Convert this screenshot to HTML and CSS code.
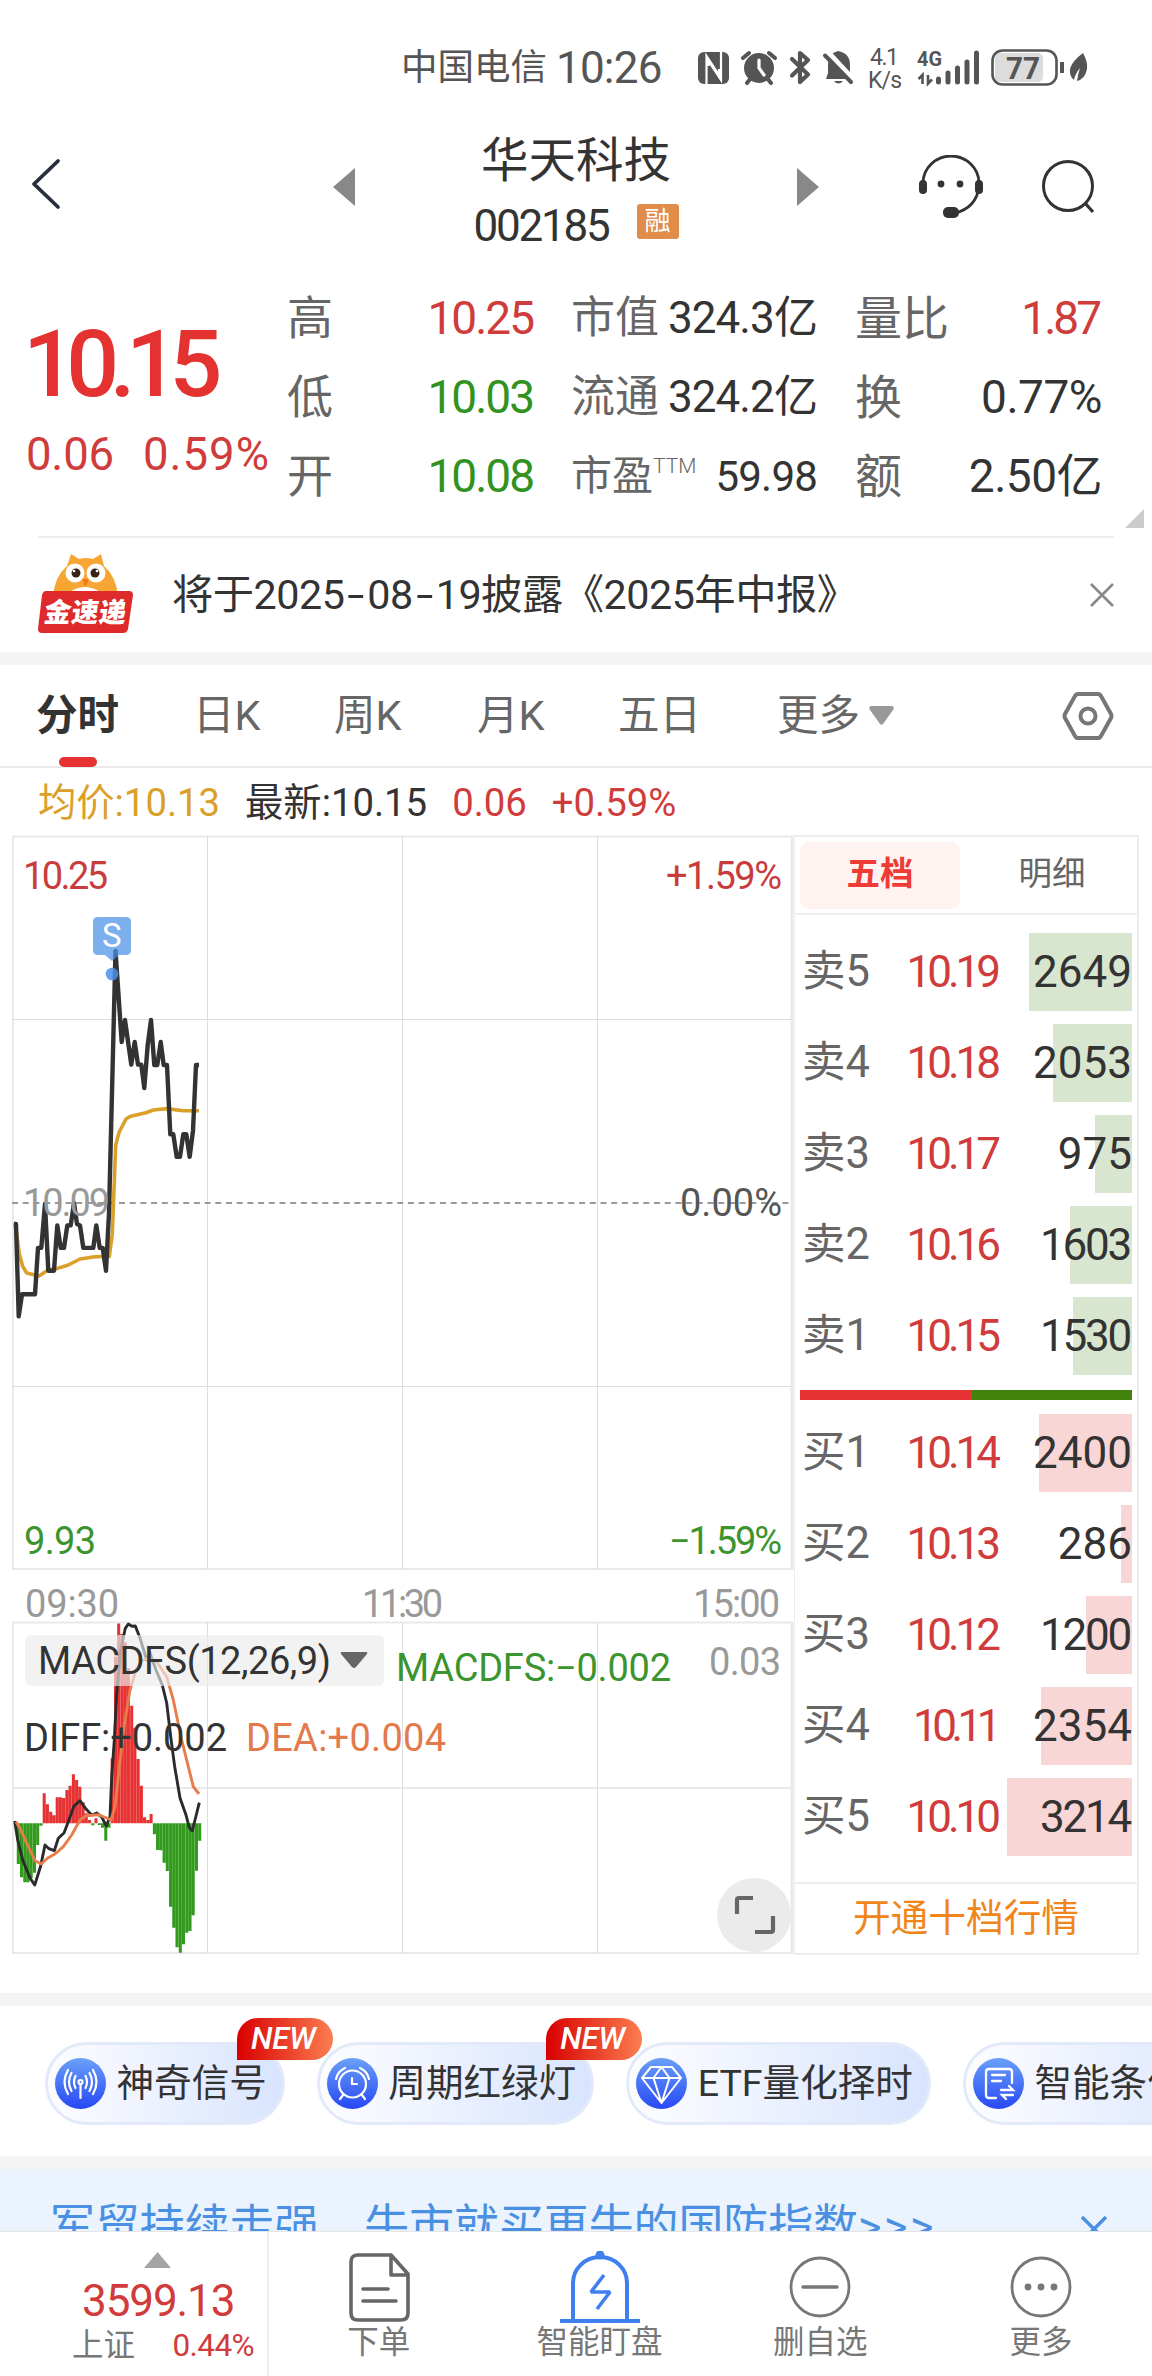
FILE: index.html
```html
<!DOCTYPE html>
<html lang="zh-CN">
<head>
<meta charset="utf-8">
<title>华天科技 002185</title>
<link rel="stylesheet" href="styles.css">
</head>
<body>
<div class="app">

<div class="status">
  <span class="carrier">中国电信</span><span class="clock">10:26</span>
  <svg class="sys" width="400" height="50" viewBox="692 42 400 50" fill="#555">
    <rect x="698" y="52" width="31" height="32" rx="6"/>
    <path d="M706.500 84V56L719 75V69M721 52V80L708.500 61V66" fill="none" stroke="#fff" stroke-width="2.200"/>
    <circle cx="759" cy="68" r="15"/>
    <path d="M743 58l6-5M775 58l-6-5M747 83l4-5M771 83l-4-5" stroke="#555" stroke-width="4" stroke-linecap="round"/>
    <path d="M759 60v8l5 7" fill="none" stroke="#fff" stroke-width="3.200" stroke-linecap="round"/>
    <path d="M792 59l16 15.500-8 7.500V53l8 7-16 15.500" fill="none" stroke="#555" stroke-width="4.200" stroke-linejoin="round" stroke-linecap="round"/>
    <path d="M838 51q12 2 12 14v8l2 6h-26l2-6v-8q0-12 10-14zM834 81h9q-4.500 5-9 0z"/>
    <path d="M826 50l28 30" stroke="#fff" stroke-width="5"/><path d="M825 55.500l26 26.500" stroke="#555" stroke-width="4" stroke-linecap="round"/>
    <text x="870" y="65" font-size="23" textLength="29">4.1</text>
    <text x="868" y="88" font-size="23" textLength="34">K/s</text>
    <text x="917" y="66" font-size="21" font-weight="700" textLength="25" lengthAdjust="spacingAndGlyphs">4G</text>
    <path d="M922.500 84v-9l-4 4M928 75v8.500l4-4" fill="none" stroke="#555" stroke-width="2.600"/>
    <path d="M938.500 82v-3M948 82V73M957.500 82V68M967 82V62M976.500 82V53" stroke="#555" stroke-width="5" stroke-linecap="round"/>
    <rect x="995" y="53" width="48" height="29" rx="5" fill="#dcdcdc"/>
    <rect x="992.500" y="50.500" width="64" height="34" rx="10" fill="none" stroke="#555" stroke-width="2.600"/>
    <text x="1006" y="79" font-size="31" font-weight="700" textLength="34" lengthAdjust="spacingAndGlyphs">77</text>
    <path d="M1062 62v11" stroke="#555" stroke-width="4"/>
    <path d="M1083 53q5 9 4 16-2 10-10 12 1-7 3-13-5 6-6 12-5-4-4-11 2-8 13-16z"/>
  </svg>
</div>

<div class="header">
  <svg width="333" height="60" viewBox="0 0 333 60"><path d="M58 4L34 27l24 23" fill="none" stroke="#27303c" stroke-width="3.800" stroke-linecap="round" stroke-linejoin="round"/></svg>
  <svg width="22" height="38" viewBox="0 0 22 38"><path d="M22 0v38L0 19z" fill="#888"/></svg>
  <div class="names">
    <div class="name">华天科技</div>
    <div class="code"><span>002185</span><i>融</i></div>
  </div>
  <svg width="22" height="38" viewBox="0 0 22 38"><path d="M0 0v38l22-19z" fill="#888"/></svg>
  <svg class="c5" width="64" height="64" viewBox="0 0 64 64"><path d="M4 30V28a28 27 0 0 1 56 0v4q-3 21-24 26" fill="none" stroke="#333" stroke-width="2.800"/><rect x="0" y="25" width="8" height="14" rx="4" fill="#333"/><rect x="56" y="25" width="8" height="14" rx="4" fill="#333"/><rect x="24" y="52" width="16" height="11" rx="5" fill="#333"/><circle cx="22" cy="29" r="3.400" fill="#333"/><circle cx="41" cy="29" r="3.400" fill="#333"/></svg>
  <svg class="c7" width="56" height="58" viewBox="0 0 56 58"><circle cx="26" cy="28" r="24.500" fill="none" stroke="#333" stroke-width="3"/><path d="M43 45l8 9" stroke="#333" stroke-width="3.200"/></svg>
</div>

<div class="quote">
  <div class="price"><div class="big">10.15</div><div class="chg"><span>0.06</span><span class="pct">0.59%</span></div></div>
  <div class="stats s1">
    <label>高</label><b class="red">10.25</b>
    <label>低</label><b class="green">10.03</b>
    <label>开</label><b class="green">10.08</b>
  </div>
  <div class="stats s2">
    <label>市值</label><b>324.3亿</b>
    <label>流通</label><b>324.2亿</b>
    <label class="pe">市盈<sup>TTM</sup></label><b class="pev">59.98</b>
  </div>
  <div class="stats s3">
    <label>量比</label><b class="red one">1.87</b>
    <label>换</label><b>0.77%</b>
    <label>额</label><b>2.50亿</b>
  </div>
  <svg class="corner" width="19" height="19" viewBox="0 0 19 19"><path d="M19 0v19H0z" fill="#ccc"/></svg>
</div>

<div class="notice">
  <svg class="owl" width="96" height="84" viewBox="0 0 96 84">
    <path d="M33 3l8 5q7-2 14 0l8-5 3 12q12 10 14 30H15q2-20 14-30z" fill="#f7a634"/>
    <path d="M30 42q17-12 34 0z" fill="#fff"/>
    <circle cx="37" cy="22" r="9.500" fill="#fff"/><circle cx="58" cy="22" r="9.500" fill="#fff"/>
    <circle cx="38" cy="22" r="4.500" fill="#3a2418"/><circle cx="57" cy="22" r="4.500" fill="#3a2418"/>
    <circle cx="36" cy="20" r="1.300" fill="#fff"/><circle cx="59" cy="20" r="1.300" fill="#fff"/>
    <path d="M44 28h7l-3.500 8z" fill="#ee7a1c"/>
    <path d="M8 40h83q4 0 4 4l-5 34q-1 4-5 4H4q-4 0-4-4l4-34q1-4 4-4z" fill="#de2a2a"/>
    <text transform="translate(5 71) skewX(-8)" font-size="27" font-weight="900" fill="#fff" textLength="82">金速递</text>
  </svg>
  <span class="msg">将于2025<em>-</em>08<em>-</em>19披露《2025年中报》</span>
  <svg width="24" height="24" viewBox="0 0 24 24"><path d="M1 1l22 22M23 1L1 23" stroke="#888" stroke-width="2.600"/></svg>
</div>
<div class="band"></div>

<div class="tabs">
  <span class="on">分时</span><span>日K</span><span>周K</span><span>月K</span><span>五日</span><span>更多</span>
  <svg width="25" height="19" viewBox="0 0 25 19"><path d="M2 0h21q3 1 1 4L14 18q-1.500 1.500-3 0L1 4Q-1 1 2 0z" fill="#999"/></svg>
  <svg class="hex" width="52" height="50" viewBox="0 0 52 50" fill="none" stroke="#777" stroke-width="4"><path d="M16 3h20q2 0 3 2l10 18q1 2 0 4L39 45q-1 2-3 2H16q-2 0-3-2L3 27q-1-2 0-4L13 5q1-2 3-2z"/><circle cx="26" cy="25" r="7.500"/></svg>
</div>

<div class="info"><span class="gold">均价:10.13</span><span>最新:10.15</span><span class="red">0.06</span><span class="red">+0.59%</span></div>

<div class="board">
<svg class="chart" width="794" height="1120" viewBox="0 835 794 1120">
  <g fill="none" stroke="#e9e9e9" stroke-width="2">
    <path d="M12 836.500H793M12 1569H793M12 1622.500H793M12 1788H793M12 1953H793"/>
    <path d="M13 836V1570M13 1622V1954"/>
    <path d="M792 836V1570M792 1622V1954" stroke-width="3"/>
  </g>
  <path d="M12 1019.500H791M12 1386.500H791M207.500 836V1569M402.500 836V1569M597.500 836V1569M207.500 1622V1953M402.500 1622V1953M597.500 1622V1953" stroke="#dedede" fill="none"/>
  <path d="M12 1203H793" stroke="#999" stroke-width="2" stroke-dasharray="6 4.700"/>
  <path d="M15 1223L16.700 1234 19.300 1254 22.700 1266.400 26.700 1273 39 1276 48 1270 56.700 1268.600 68.300 1265 80 1259 95 1256.800 109.300 1256.400 112.300 1234 115.700 1145 119 1132.500 126 1119 130 1116.400 146.700 1112.500 153.300 1110 166.700 1108.600 183.300 1110.700H199" fill="none" stroke="#dba02a" stroke-width="3.600" stroke-linejoin="round"/>
  <path d="M14 1224H16L18.700 1316.400 22 1294.300H35L38 1247.900H41.300L45 1204 48.300 1270.700H54L57.300 1225.400 60.700 1247.900H64L67.300 1225.400H70.700L74 1203 77 1224 80 1225.400 83.300 1247.900H93.300L96.300 1225.400 99.700 1247.900H102.700L106 1270.700 109 1213 115.500 951 121.700 1042 125 1020 131.300 1064.600 134.700 1042 138 1064.600H141.300L144.300 1088 147.700 1045 151 1020 154.300 1065H157.300L160.700 1042 163.700 1065H167L170.300 1134.300H173.300L176.700 1156.800H180L183.300 1134.300H186.300L189.700 1156.800 193 1130.700 196 1065H199" fill="none" stroke="#333" stroke-width="4.400" stroke-linejoin="round"/>
  <path d="M98 917h28q5 0 5 5v28q0 5-5 5h-7l-7 6-7-6h-7q-5 0-5-5v-28q0-5 5-5z" fill="#4a90e8" opacity=".72"/>
  <circle cx="112" cy="974" r="6.300" fill="#4a90e8" opacity=".85"/>
  <text x="102" y="947" font-size="33" fill="#fff">S</text>

  <path d="M18.300 1823.300V1864M21.500 1823.300V1877.300M24.800 1823.300V1882.300M28 1823.300V1882.300M31.200 1823.300V1878.300M34.500 1823.300V1872.700M37.700 1823.300V1845M41 1823.300V1825.700M92.800 1823.300V1825.300M99.300 1823.300V1825M102.500 1823.300V1827.700M105.800 1823.300V1840.700M109 1823.300V1827.700M154.400 1823.300V1834.300M157.600 1823.300V1850M160.800 1823.300V1850.300M164.100 1823.300V1862.700M167.300 1823.300V1871M170.600 1823.300V1906.700M173.800 1823.300V1927.700M177 1823.300V1947.300M180.300 1823.300V1952.700M183.500 1823.300V1944.300M186.800 1823.300V1932.700M190 1823.300V1931M193.200 1823.300V1915.300M196.500 1823.300V1870.700M199.700 1823.300V1840.700" stroke="#329b1e" stroke-width="3.060"/>
  <path d="M44.200 1823.300V1793.300M47.400 1823.300V1804.300M50.700 1823.300V1811.700M53.900 1823.300V1815.300M57.200 1823.300V1797.300M60.400 1823.300V1797.300M63.600 1823.300V1798M66.900 1823.300V1790M70.100 1823.300V1785.700M73.400 1823.300V1774.300M76.600 1823.300V1780M79.800 1823.300V1786.700M83.100 1823.300V1802.300M86.300 1823.300V1813.300M89.600 1823.300V1820M96 1823.300V1818.300M112.200 1823.300V1758.300M115.500 1823.300V1656.700M118.700 1823.300V1623.500M122 1823.300V1634M125.200 1823.300V1642.300M128.400 1823.300V1668.300M131.700 1823.300V1705.700M134.900 1823.300V1727.700M138.200 1823.300V1759M141.400 1823.300V1785.700M144.600 1823.300V1817.300M147.900 1823.300V1820M151.100 1823.300V1814" stroke="#e63232" stroke-width="3.060"/>
  <path d="M14.700 1821L17.700 1840 22.700 1860 30 1878 34.700 1885 40.700 1866 45 1845 49 1848.700 54.300 1850.700 58.300 1838.300 64 1833 68.300 1821.700 74 1806 80 1800.700 86 1809 91.700 1815 96.700 1813 101.700 1817 106.300 1826 110 1816.700 111.700 1776.700 114.300 1740 116.700 1693 120.700 1650 125.300 1628.300 128.300 1624 132 1626.300 135.300 1626 140 1638 146.700 1660 150 1653 156 1670 162.300 1685 166.700 1703 170.700 1736.700 174.700 1766.700 180 1798 186 1815 189.300 1827.700 192.300 1830.700 195 1820 199.300 1802.700" fill="none" stroke="#2b2b2b" stroke-width="2.900" stroke-linejoin="round"/>
  <path d="M16 1821.700L20 1828.300 28.300 1846.700 35 1860.700 41.300 1864 47.700 1858 55 1854 63.300 1846.700 71.700 1835 80 1820 86 1815.700 98.300 1814.700 106.700 1818 111 1820 115 1806.700 118.300 1776.700 124 1726.700 130 1690 136 1670 141.700 1661 148.300 1658 156.700 1661.700 166.700 1676.700 173.300 1700 181.700 1740 193.300 1786.700 199 1794" fill="none" stroke="#e87c4a" stroke-width="2.900" stroke-linejoin="round"/>
  <rect x="25" y="1635" width="359" height="51" rx="6" fill="#ebebeb" opacity=".66"/>
  <path d="M342 1652h24q2 0 1 2l-11 13q-2 2-4 0l-11-13q-1-2 1-2z" fill="#666"/>

  <g font-size="38">
    <text x="23" y="889" textLength="85" fill="#c93c3c">10.25</text>
    <text x="666" y="889" textLength="116" fill="#c93c3c">+1.59%</text>
    <text x="23" y="1216" textLength="87" fill="#999">10.09</text>
    <text x="680" y="1216" textLength="102" fill="#555">0.00%</text>
    <text x="24" y="1554" textLength="72" fill="#3c942e">9.93</text>
    <text x="669" y="1554" textLength="113" fill="#3c942e">−1.59%</text>
    <g fill="#999">
      <text x="25" y="1617" textLength="94">09:30</text>
      <text x="362" y="1617" textLength="81">11:30</text>
      <text x="693" y="1617" textLength="87">15:00</text>
      <text x="709" y="1675" textLength="72">0.03</text>
    </g>
    <text x="38" y="1674" textLength="293" fill="#333">MACDFS(12,26,9)</text>
    <text x="396" y="1681" textLength="275" fill="#3c942e">MACDFS:−0.002</text>
    <text x="24" y="1751" textLength="203" fill="#333">DIFF:+0.002</text>
    <text x="246" y="1751" textLength="200" fill="#e27a4c">DEA:+0.004</text>
  </g>
  <circle cx="754" cy="1915" r="37" fill="#ebebeb"/>
  <path d="M737 1914v-14q0-2 2-2h14M773 1916v14q0 2-2 2h-16" fill="none" stroke="#666" stroke-width="4.200"/>
</svg>

<div class="book">
  <div class="btabs"><span class="on">五档</span><span>明细</span></div>
  <div class="rows sell">
    <div class="row"><label>卖5</label><b>10.19</b><u style="width:103px"></u><span>2649</span></div>
    <div class="row"><label>卖4</label><b>10.18</b><u style="width:79px"></u><span>2053</span></div>
    <div class="row"><label>卖3</label><b>10.17</b><u style="width:37px"></u><span>975</span></div>
    <div class="row"><label>卖2</label><b>10.16</b><u style="width:62px"></u><span class="tight">1603</span></div>
    <div class="row"><label>卖1</label><b>10.15</b><u style="width:59px"></u><span class="tight">1530</span></div>
  </div>
  <div class="ratio"></div>
  <div class="rows buy">
    <div class="row"><label>买1</label><b>10.14</b><u style="width:93px"></u><span>2400</span></div>
    <div class="row"><label>买2</label><b>10.13</b><u style="width:11px"></u><span>286</span></div>
    <div class="row"><label>买3</label><b>10.12</b><u style="width:46px"></u><span class="tight">1200</span></div>
    <div class="row"><label>买4</label><b class="narrow">10.11</b><u style="width:91px"></u><span>2354</span></div>
    <div class="row"><label>买5</label><b>10.10</b><u style="width:125px"></u><span class="tight">3214</span></div>
  </div>
  <div class="open">开通十档行情</div>
</div>
</div>

<div class="band b2"></div>
<div class="chips">
  <svg width="0" height="0" class="defs"><defs><linearGradient id="ic" x2="0" y2="1"><stop offset="0" stop-color="#6aa0f8"/><stop offset="1" stop-color="#2748f5"/></linearGradient></defs></svg>
  <div class="chip"><svg width="51" height="51" viewBox="0 0 51 51"><circle cx="25.500" cy="25.500" r="25.500" fill="url(#ic)"/><g fill="none" stroke="#fff" stroke-width="2.200" stroke-linecap="round"><circle cx="25.500" cy="24" r="2"/><path d="M25.500 27v13M20.500 30q-3-6 0-12M30.500 30q3-6 0-12M16.500 33q-5-9 0-18M34.500 33q5-9 0-18M13 36q-7-12 0-24M38 36q7-12 0-24"/></g></svg><span>神奇信号</span><i>NEW</i></div>
  <div class="chip"><svg width="51" height="51" viewBox="0 0 51 51"><circle cx="25.500" cy="25.500" r="25.500" fill="url(#ic)"/><g fill="none" stroke="#fff" stroke-width="2.200" stroke-linecap="round"><circle cx="25.500" cy="26" r="13.500"/><path d="M25 20v6h5M16 37l-3 4M35 37l3 4M9 21q2-8 9-11M42 21q-2-8-9-11"/></g></svg><span>周期红绿灯</span><i>NEW</i></div>
  <div class="chip"><svg width="51" height="51" viewBox="0 0 51 51"><circle cx="25.500" cy="25.500" r="25.500" fill="url(#ic)"/><path d="M15 9h21l9 11-19.500 25L6 20zM6 20h39M25.500 9l-8 11 8 25 8-25z" fill="none" stroke="#fff" stroke-width="2" stroke-linejoin="round"/></svg><span>ETF量化择时</span></div>
  <div class="chip"><svg width="51" height="51" viewBox="0 0 51 51"><circle cx="25.500" cy="25.500" r="25.500" fill="url(#ic)"/><path d="M39 25V14q0-3-3-3H16q-3 0-3 3v23q0 3 3 3h7M19 17h13M19 23h9M28 32h12l-4-4M40 37H29l4 4" fill="none" stroke="#fff" stroke-width="2.300" stroke-linecap="round"/></svg><span>智能条件单</span></div>
</div>
<div class="band"></div>
<div class="banner"><span>军贸持续走强　牛市就买更牛的国防指数<em>&gt;&gt;&gt;</em></span><svg width="26" height="26" viewBox="0 0 26 26"><path d="M1 1l24 24M25 1L1 25" stroke="#4a90e2" stroke-width="3.400"/></svg></div>

<div class="nav">
  <div class="index"><svg width="27" height="16" viewBox="0 0 27 16"><path d="M13.500 0L27 16H0z" fill="#a5a5a5"/></svg><strong>3599.13</strong><p><span>上证</span><em>0.44%</em></p></div>
  <div class="item"><svg width="84" height="72" viewBox="0 0 84 72" fill="none" stroke="#666" stroke-width="3.600" stroke-linejoin="round" stroke-linecap="round"><path d="M21 4h33l17 19v39q0 7-7 7H21q-7 0-7-7V11q0-7 7-7zM54 4v20h17M26 38h25M26 50h33"/></svg><span>下单</span></div>
  <div class="item"><svg width="84" height="72" viewBox="0 0 84 72" fill="none" stroke="#3f80ee" stroke-width="4"><path d="M2 70h80M15 70V32a27 26 0 0 1 54 0v38"/><circle cx="42" cy="4" r="2.500" fill="#3f80ee"/><path d="M46 24L33 41h19L39 58" stroke-width="3.600" stroke-linejoin="bevel"/></svg><span>智能盯盘</span></div>
  <div class="item"><svg width="84" height="72" viewBox="0 0 84 72" fill="none" stroke="#777" stroke-width="2.800"><circle cx="42" cy="36" r="29"/><path d="M25 36h34" stroke-width="3.400" stroke-linecap="round"/></svg><span>删自选</span></div>
  <div class="item"><svg width="84" height="72" viewBox="0 0 84 72" fill="#777"><circle cx="42" cy="36" r="29" fill="none" stroke="#777" stroke-width="2.800"/><circle cx="29" cy="36" r="3.400"/><circle cx="42" cy="36" r="3.400"/><circle cx="55" cy="36" r="3.400"/></svg><span>更多</span></div>
</div>
</div>
</body>
</html>
```

FILE: styles.css
```css
* { box-sizing: border-box; }
body {
  margin: 0;
  background: #fff;
  color: #333;
  font-family: Roboto, "Noto Sans CJK SC", sans-serif;
}
svg { display: block; flex: none; }
b, i, em, strong, u { font-weight: 400; font-style: normal; text-decoration: none; }
p { margin: 0; }
.app { width: 1152px; height: 2376px; overflow: hidden; display: flex; flex-direction: column; }
.app > * { flex: none; }
.red { color: #d03b3b; }
.green { color: #32921f; }
.gold { color: #dba02a; }

.status { height: 110px; padding: 42px 0 0 401px; display: flex; color: #555; line-height: 52px; white-space: nowrap; }
.carrier { font-size: 36.500px; width: 155px; }
.clock { font-size: 44px; width: 136px; letter-spacing: -.8px; }

.header {
  height: 154px;
  display: grid;
  grid-template-columns: 333px 22px 442px 22px 100px 64px 59px 56px;
  align-items: center;
}
.c5 { grid-column: 6; }
.c7 { grid-column: 8; }
.names { text-align: center; padding-top: 12px; }
.name { font-size: 47.500px; line-height: 66px; }
.code { display: flex; justify-content: center; align-items: center; gap: 28px; font-size: 44px; line-height: 64px; letter-spacing: -2.200px; }
.code i { width: 42px; height: 35px; margin-top: -9px; background: #e08c4a; color: #fff; border-radius: 3px; font-size: 26px; line-height: 34px; letter-spacing: 0; }

.quote { position: relative; height: 272px; padding: 15px 0 0 26px; display: flex; }
.price { width: 261px; padding-top: 37px; color: #e43230; white-space: nowrap; }
.big { font-size: 93px; font-weight: 500; line-height: 98px; letter-spacing: -9.500px; margin-left: -3px; }
.chg { display: flex; font-size: 45.500px; line-height: 50px; margin-top: 16px; color: #d03b3b; letter-spacing: -.2px; }
.chg .pct { margin-left: 29px; letter-spacing: 1px; }
.stats { display: grid; grid-template-columns: 88px 1fr; grid-auto-rows: 79px; line-height: 79px; white-space: nowrap; }
.stats label { color: #666; font-size: 46px; }
.stats b { text-align: right; font-size: 46px; letter-spacing: -2px; margin-right: 0; }
.s1 { width: 246px; }
.s2 { width: 246px; margin-left: 38px; }
.s2 label { font-size: 44px; }
.s2 b { font-size: 44px; letter-spacing: -.900px; }
.s2 .pe { font-size: 41px; }
.s2 .pev { font-size: 42px; letter-spacing: -.8px; }
.pe sup { font-size: 21px; vertical-align: 17px; line-height: 0; font-weight: 300; }
.s3 { width: 246px; margin-left: 38px; }
.s3 label { font-size: 47px; }
.stats.s3 b { letter-spacing: -.500px; margin-right: -1px; }
.stats.s3 .one { letter-spacing: -3px; margin-right: 2px; }
.corner { position: absolute; right: 8px; bottom: 8px; }

.notice { height: 116px; margin: 0 38px; border-top: 2px solid #eee; display: flex; align-items: center; }
.owl { margin-top: -4px; }
.msg { font-size: 41.300px; margin-left: 38px; flex: 1; letter-spacing: -.5px; white-space: nowrap; line-height: 60px; }
.msg em { display: inline-block; padding: 0 6px; transform: scaleX(1.5); }
.band { height: 13px; background: #f4f4f4; }

.tabs { height: 103px; border-bottom: 2px solid #eaeaea; padding: 0 38px 0 36px; display: flex; align-items: center; font-size: 41.500px; color: #666; line-height: 98px; white-space: nowrap; }
.tabs span { width: 143px; }
.tabs span.on { width: 157px; color: #333; font-weight: 700; position: relative; }
.tabs span:nth-child(2) { width: 141px; }
.tabs span:nth-child(4) { width: 141px; }
.tabs span:nth-child(5) { width: 159px; }
.tabs span:nth-child(6) { width: 92px; }
.tabs .on::after { content: ""; position: absolute; left: 23px; bottom: -2px; width: 38px; height: 10px; border-radius: 5px; background: #e63232; }
.hex { margin-left: auto; }

.info { height: 67px; padding-left: 38px; display: flex; gap: 25px; font-size: 38.300px; line-height: 69px; white-space: nowrap; }

.board { display: flex; height: 1120px; width: 1139px; }
.chart { font-family: Roboto, "Noto Sans CJK SC", sans-serif; }
.book { flex: 1; border: 2px solid #ededed; border-left-width: 1px; }
.btabs { height: 78px; border-bottom: 2px solid #eee; padding: 5px 5px; display: flex; font-size: 33.500px; line-height: 63px; text-align: center; color: #666; }
.btabs span { flex: 1; height: 67px; padding-left: 12px; }
.btabs .on { flex: 0 0 160px; padding: 0; background: #fff3f2; color: #ee3b36; font-weight: 700; border-radius: 9px; }
.rows { padding: 18px 5px 0; display: grid; gap: 13px; }
.row { position: relative; height: 78px; display: flex; align-items: center; font-size: 44px; line-height: 78px; }
.row label { width: 102px; font-size: 43.500px; color: #666; padding-left: 2px; }
.row b { width: 95px; text-align: right; color: #d03b3b; letter-spacing: -4px; }
.row .narrow { letter-spacing: -5.500px; width: 94px; }
.row span { position: relative; margin-left: auto; }
.row .tight { letter-spacing: -2.200px; margin-right: 2px; }
.row u { position: absolute; right: 0; top: 0; height: 78px; background: #d9e6cf; }
.buy .row u { background: #f9d6d6; }
.ratio { height: 10px; margin: 15px 5px 0; background: linear-gradient(90deg, #e63232 51.700%, #43830d 0); }
.buy { padding-top: 14px; }
.open { margin-top: 26px; border-top: 2px solid #eee; text-align: center; font-size: 37.700px; line-height: 69px; color: #f08519; }

.b2 { margin-top: 38px; }
.chips { height: 150px; padding: 36px 0 0 45px; display: flex; gap: 32px; }
.defs { position: absolute; }
.chip { position: relative; flex: none; height: 83px; border: 3px solid #e2eaf9; border-radius: 42px; padding: 0 15px 0 7px; background: linear-gradient(90deg, #fdfdff, #d8e4fe); display: flex; align-items: center; gap: 10.500px; font-size: 37.600px; line-height: 73px; white-space: nowrap; }
.chip i { position: absolute; right: -51px; top: -27px; width: 96px; height: 42px; border-radius: 21px 21px 21px 0; background: linear-gradient(90deg, #d80000, #fb7d50); color: #fff; font-size: 31px; font-weight: 500; font-style: italic; line-height: 41px; text-align: center; padding-right: 3px; }
.banner { height: 62px; background: #eaf3fe; overflow: hidden; padding: 24px 45px 0 50px; display: flex; justify-content: space-between; align-items: flex-start; font-size: 44.900px; line-height: 67px; color: #4a90e2; white-space: nowrap; }
.banner em { letter-spacing: 2.500px; }
.banner svg { margin-top: 23px; }

.nav { height: 145px; border-top: 1px solid #e5e5e5; display: flex; background: #fff; }
.index { width: 269px; border-right: 2px solid #eee; padding: 20px 0 0 47px; }
.index svg { margin-left: 97px; }
.index strong { display: block; font-size: 44px; line-height: 52px; letter-spacing: -1.100px; color: #d03b3b; margin: 7px 0 0 35px; }
.index p { display: flex; justify-content: space-between; font-size: 31.500px; line-height: 37px; color: #777; padding: 0 13px 0 25px; }
.index em { color: #d03b3b; letter-spacing: -.6px; }
.item { flex: 1; display: flex; flex-direction: column; align-items: center; padding: 19px 1px 0 0; font-size: 31.500px; line-height: 40px; color: #777; }
```
